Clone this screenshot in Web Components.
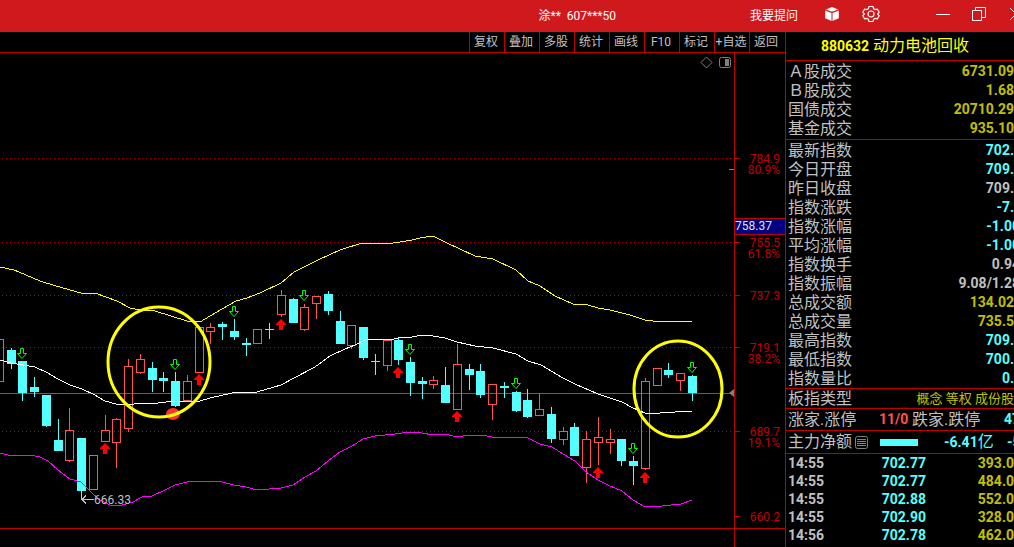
<!DOCTYPE html>
<html lang="zh-CN">
<head>
<meta charset="utf-8">
<meta name="viewport" content="width=device-width, initial-scale=1">
<title>880632 动力电池回收</title>
<style>
  html, body { margin: 0; background: #000; }
  body {
    min-height: 100vh;
    overflow: hidden;
    color: #c0c0c0;
    font-family: Roboto, "Noto Sans CJK SC", sans-serif;
    font-size: 12px;
    --line: #c00000;
    --cyan: #54ffff;
    --gold: #c0c000;
    --up: #ff5252;
  }
</style>
</head>
<body>
<trade-app>
  <title-bar slot="title">
    <span slot="account">涂** &nbsp;607***50</span>
    <a slot="ask" href="#ask">我要提问</a>
  </title-bar>
  <tool-strip slot="tools">
    <button type="button">复权</button>
    <button type="button">叠加</button>
    <button type="button">多股</button>
    <button type="button">统计</button>
    <button type="button">画线</button>
    <button type="button">F10</button>
    <button type="button">标记</button>
    <button type="button">+自选</button>
    <button type="button">返回</button>
  </tool-strip>
  <price-chart slot="chart"></price-chart>
  <quote-panel slot="quotes">
    <quote-heading><span slot="code">880632</span><span slot="name">动力电池回收</span></quote-heading>
    <quote-table data-set="turnover"></quote-table>
    <quote-table data-set="index"></quote-table>
    <quote-table data-set="kind"></quote-table>
    <advance-row></advance-row>
    <flow-row></flow-row>
    <tick-table></tick-table>
  </quote-panel>
</trade-app>

<script>
const mount = (host, html) => {
  const t = document.createElement('template');
  t.innerHTML = html;
  host.attachShadow({ mode: 'open' }).appendChild(t.content.cloneNode(true));
};

customElements.define('trade-app', class extends HTMLElement {
  constructor() {
    super();
    mount(this, `
      <style>
        :host { display: block; min-height: 100vh; }
        .body { display: grid; grid-template-columns: minmax(0, 1fr) 229px; min-height: calc(100vh - 32px); }
        main { display: flex; flex-direction: column; min-width: 0; }
      </style>
      <slot name="title"></slot>
      <div class="body">
        <main><slot name="tools"></slot><slot name="chart"></slot></main>
        <slot name="quotes"></slot>
      </div>`);
  }
});

customElements.define('title-bar', class extends HTMLElement {
  constructor() {
    super();
    mount(this, `
      <style>
        :host { display: flex; height: 32px; background: #cf191d; color: #fff; overflow: hidden;
                align-items: center; justify-content: flex-end; }
        ::slotted(a) { color: inherit; text-decoration: none; }
        .account { margin-right: 134px; padding-bottom: 4px; }
        .ask { margin-right: 26px; padding-bottom: 4px; }
        button { background: none; border: 0; padding: 0; margin: 0; height: 28px; color: #fff;
                 align-self: flex-start; display: flex; align-items: center; flex: none; }
        svg { display: block; }
        .cube { margin-right: 22px; }
        .gear { margin-right: 55px; }
        .min { margin-right: 20px; }
        .max { margin-right: 23px; }
        .close { margin-right: -8px; }
      </style>
      <span class="account"><slot name="account"></slot></span>
      <span class="ask"><slot name="ask"></slot></span>
      <button class="cube" type="button" aria-label="工具箱">
        <svg width="16" height="16" viewBox="0 0 16 16"><path fill="#fff" d="M8 1 14.2 3.4 8 5.8 1.8 3.4zM1.2 4.4 7.5 6.9v8L1.2 12.3zM14.8 4.4v7.9L8.5 14.9v-8z"/></svg>
      </button>
      <button class="gear" type="button" aria-label="设置">
        <svg width="18" height="18" viewBox="0 0 18 18" fill="none" stroke="#fff" stroke-width="1.2" stroke-linejoin="round"><path d="M7 1.5h4l.6 2.2 1.5.9 2.2-.6 1.9 3.3L15.6 9l1.6 1.7-1.9 3.3-2.2-.6-1.5.9-.6 2.2H7l-.6-2.2-1.5-.9-2.2.6L.8 10.700 2.400 9 .8 7.300 2.700 4l2.200.6 1.500-.9z"/><circle cx="9" cy="9" r="3"/></svg>
      </button>
      <button class="min" type="button" aria-label="最小化">
        <svg width="16" height="16" viewBox="0 0 16 16"><path d="M1 8.500h14" stroke="#fff"/></svg>
      </button>
      <button class="max" type="button" aria-label="还原">
        <svg width="16" height="16" viewBox="0 0 16 16" fill="none" stroke="#fff"><path d="M1.500 4.500h9v10h-9zM4.500 4.500v-3h10v10h-4"/></svg>
      </button>
      <button class="close" type="button" aria-label="关闭">
        <svg width="12" height="12" viewBox="0 0 12 12"><path d="M0 0 12 12M12 0 0 12" stroke="#fff"/></svg>
      </button>`);
  }
});

customElements.define('tool-strip', class extends HTMLElement {
  constructor() {
    super();
    mount(this, `
      <style>
        :host { display: flex; justify-content: flex-end; height: 20px; padding-right: 1px;
                border-bottom: 1px solid var(--line); }
        ::slotted(button) { width: 35px; padding: 0 2px 0 0; border: 0; border-left: 1px solid var(--line);
                background: none; color: inherit; font: inherit; line-height: 20px; white-space: nowrap; }
      </style>
      <slot></slot>`);
  }
});

/* x centre, high, low, body top, body bottom; 1 = rising (hollow) */
const CANDLES = [
  [-1,339,382,339,382,1],[11,348,369,350,364,0],[22,361,401,361,393,0],[34,377,397,387,392,0],
  [46,395,427,395,426,0],[58,419,451,440,451,0],[69,408,462,430,461,1],[81,438,499,438,491,0],
  [93,455,490,455,490,1],[105,415,442,430,442,1],[116,418,468,419,443,1],[128,359,432,366,429,1],
  [140,354,374,359,373,1],[152,362,392,368,380,0],[163,372,392,378,381,0],[175,372,407,381,406,0],
  [187,375,401,381,401,1],[199,327,373,327,373,1],[210,323,344,327,332,1],[222,322,340,324,327,0],
  [234,319,340,331,337,0],[246,338,356,343,345,0],[257,329,344,329,344,1],[269,323,339,329,330,0],
  [281,290,317,295,315,1],[293,298,323,299,323,0],[304,304,331,307,330,1],[316,296,319,296,304,1],
  [328,291,315,294,311,0],[340,311,344,321,344,0],[351,325,349,325,346,1],[363,327,360,327,358,0],
  [375,354,375,361,362,0],[387,340,371,340,366,1],[398,337,365,340,360,0],[410,357,396,362,383,0],
  [422,377,399,381,384,0],[433,376,389,380,385,1],[445,367,403,385,403,0],[457,344,410,364,410,1],
  [469,364,390,369,375,0],[480,364,398,371,395,0],[492,384,420,384,405,1],[504,382,398,386,388,0],
  [516,391,412,392,411,0],[527,389,418,400,417,0],[539,394,416,409,416,1],[551,407,443,414,439,0],
  [563,427,445,431,440,1],[574,423,456,427,456,0],[586,431,483,439,468,1],[598,417,465,437,443,1],
  [610,429,454,439,443,1],[621,439,466,439,461,0],[633,456,485,461,466,0],[645,378,470,381,469,1],
  [657,368,386,368,386,1],[668,363,378,370,375,0],[680,373,391,373,381,1],[692,375,401,376,393,0]];
const BUYS = [[105,443],[199,374],[281,319],[398,367],[457,411],[598,467],[645,472]];
const SELLS = [[22,348],[175,359],[234,306],[304,290],[410,344],[516,378],[633,443],[692,362]];
const UPPER = '0,267 14,270 26,275 40,281 56,286 81,293 95,293 117,301 130,308 140,310 155,311 187,321 200,322 210,316 222,309 236,301 247,298 260,293 281,283 294,272 304,267 320,259 340,250 362,243 378,243 387,244 400,242 412,240 420,238 433,236 447,243 475,256 493,259 516,270 528,281 540,286 555,296 573,304 588,305 598,308 610,310 630,315 645,320 653,321 686,321 692,322';
const MIDDLE = '0,360 11,363 35,367 46,372 58,379 70,385 82,389 93,394 105,401 116,404 128,405 140,403 158,403 175,401 200,401 210,398 232,393 257,392 281,385 294,378 315,367 330,356 345,349 355,345 365,340 380,339 390,340 398,338 412,337 422,335 433,336 445,338 457,342 475,346 493,348 516,354 528,361 541,365 563,378 575,384 598,394 622,402 633,408 645,413 660,413 675,412 692,411';
const LOWER = '0,453 12,456 30,455 40,457 48,461 58,470 70,479 81,482 93,494 100,500 112,506 122,505 133,502 142,497 152,496 165,490 175,485 187,482 199,481 210,481 222,482 234,485 246,487 257,490 269,489 281,488 293,485 305,477 316,471 328,461 340,452 352,446 363,439 375,436 395,434 410,432 422,433 433,435 445,434 457,437 470,435 482,435 492,437 510,437 528,438 540,444 552,447 563,454 575,461 586,472 598,480 610,486 622,491 633,500 645,507 662,506 681,504 692,500';
const LEVELS = [[158,'784.9','80.9%'],[242,'755.5','61.8%'],[295,'737.3',''],[347,'719.1','38.2%'],[431,'689.7','19.1%'],[516,'660.2','']];

const candle = ([x, hi, lo, top, bot, up]) => up
  ? `<g fill="#ff5252"><path d="M${x} ${hi}h1v${top - hi}h-1zM${x} ${bot}h1v${lo - bot}h-1z"/><path fill="none" stroke="#ff5252" d="M${x - 3.5} ${top + 0.5}h8v${bot - top - 1}h-8z"/></g>`
  : `<path fill="#54ffff" d="M${x} ${hi}h1v${lo - hi}h-1zM${x - 4} ${top}h9v${bot - top}h-9z"/>`;

customElements.define('price-chart', class extends HTMLElement {
  constructor() {
    super();
    mount(this, `
      <style>
        :host { display: block; }
        svg { display: block; width: 100%; height: auto; }
        text { font-family: Roboto, sans-serif; font-size: 12px; }
        .crisp { shape-rendering: crispEdges; }
      </style>
      <svg viewBox="0 53 785 494" role="img" aria-label="K线图">
        <g class="crisp">
          <g stroke="#c00000" stroke-dasharray="1 3">
            ${LEVELS.slice(0, 5).map(([y]) => `<path d="M2 ${y + 0.5}H733"/>`).join('')}
          </g>
          <path stroke="#606060" d="M0 393.500H734"/>
          ${CANDLES.map(candle).join('')}
          <g fill="none" stroke-width="1">
            <polyline stroke="#ffff00" points="${UPPER}"/>
            <polyline stroke="#ffffff" points="${MIDDLE}"/>
            <polyline stroke="#ff00ff" points="${LOWER}"/>
          </g>
          <g stroke="#c00000">
            <path d="M734.500 53V547M0 528.500H785"/>
            ${LEVELS.map(([y]) => `<path d="M735 ${y + 0.5}h5"/>`).join('')}
            <path stroke="#ff5252" d="M729 169.500h5"/>
          </g>
          <path fill="#000080" stroke="#c00000" d="M734.500 218.500H786V234.500H734.500z"/>
          <path stroke="#c0c0c0" fill="none" d="M82 499.500H94M86 495.500 82 499.500 86 503.500"/>
        </g>
        <path fill="#808080" d="M729 393l5-4v8z"/>
        <g fill="#ff0000">${BUYS.map(([x, y]) => `<path d="M${x} ${y}l5 5v1h-3v5h-4v-5h-3v-1z"/>`).join('')}</g>
        <g fill="none" stroke="#00ff00">${SELLS.map(([x, y]) => `<path d="M${x - 1.5} ${y + 0.5}h3v5h3l-4.500 5-4.500-5h3z"/>`).join('')}</g>
        <ellipse cx="173" cy="414" rx="7" ry="6" fill="#ff3232"/>
        <g fill="none" stroke="#ffff00" stroke-width="3">
          <ellipse cx="159" cy="362" rx="51" ry="55"/>
          <ellipse cx="678" cy="389" rx="44" ry="48"/>
        </g>
        <text x="94" y="504" fill="#c0c0c0">666.33</text>
        <text x="735" y="230" fill="#e0e0e0">758.37</text>
        <g fill="#c00000" text-anchor="end">
          ${LEVELS.map(([y, a, b]) => `<text x="780" y="${y + 5}">${a}</text>${b ? `<text x="780" y="${y + 16}">${b}</text>` : ''}`).join('')}
        </g>
        <g fill="none" stroke="#808080">
          <path d="M701 62.500 706.500 57 712 62.500 706.500 68z"/>
          <rect x="719.500" y="57.500" width="11" height="10" rx="2"/>
        </g>
        <path fill="#808080" d="M725 59h4v7h-4z"/>
      </svg>`);
  }
});

customElements.define('quote-panel', class extends HTMLElement {
  constructor() {
    super();
    mount(this, `
      <style>:host { display: block; border-left: 1px solid var(--line); overflow: hidden; min-width: 0; }</style>
      <slot></slot>`);
  }
});

customElements.define('quote-heading', class extends HTMLElement {
  constructor() {
    super();
    mount(this, `
      <style>
        :host { display: flex; justify-content: center; align-items: center; gap: 4px; height: 28px;
                padding-right: 10px; color: #ffff00; font-size: 16px; line-height: 24px;
                border-bottom: 1px solid var(--line); }
        b { font-size: 14px; }
      </style>
      <b><slot name="code"></slot></b><slot name="name"></slot>`);
  }
});

/* label, value, colour class, and whether the value runs past the panel's edge */
const SETS = {
  turnover: [['Ａ股成交','6731.09','gold'],['Ｂ股成交','1.68','gold'],['国债成交','20710.29','gold'],['基金成交','935.10','gold']],
  index: [['最新指数','702.','cyan'],['今日开盘','709.','cyan'],['昨日收盘','709.',''],['指数涨跌','-7.','cyan'],
    ['指数涨幅','-1.00','cyan',1],['平均涨幅','-1.00','cyan',1],['指数换手','0.94','',1],['指数振幅','9.08/1.28','',1],
    ['总成交额','134.02','gold'],['总成交量','735.5','gold'],['最高指数','709.','cyan'],['最低指数','700.','cyan'],['指数量比','0.','cyan']],
  kind: [['板指类型','概念 等权 成份股','gold words']]
};

customElements.define('quote-table', class extends HTMLElement {
  connectedCallback() {
    if (this.shadowRoot) return;
    mount(this, `
      <style>
        :host { display: block; border-bottom: 1px solid var(--line); }
        :host([data-set="turnover"]) { padding: 1px 0; }
        :host([data-set="index"]) { padding-top: 1px; }
        table { width: 100%; border-collapse: collapse; }
        tr { height: 19px; }
        th, td { padding: 0; line-height: 19px; white-space: nowrap; }
        th { padding-left: 2px; text-align: left; font-weight: 400; font-size: 16px; }
        td { text-align: right; font-size: 14px; font-weight: 700; }
        .gold { color: var(--gold); }
        .cyan { color: var(--cyan); }
        .words { font-size: 13px; font-weight: 400; }
        .over { margin-right: -6px; }
      </style>
      <table>${SETS[this.dataset.set].map(([k, v, c, o]) =>
        `<tr><th scope="row">${k}</th><td class="${c}"><span class="${o ? 'over' : ''}">${v}</span></td></tr>`).join('')}</table>`);
  }
});

customElements.define('advance-row', class extends HTMLElement {
  constructor() {
    super();
    mount(this, `
      <style>
        :host { display: grid; grid-template-columns: 91px 33px 92px 1fr; align-items: center; height: 21px;
                padding-left: 2px; border-bottom: 1px solid var(--line); font-size: 16px; line-height: 21px; white-space: nowrap; overflow: hidden; }
        b { font-size: 14px; }
        .up { color: var(--up); }
        .down { color: var(--cyan); }
      </style>
      <span>涨家.涨停</span><b class="up">11/0</b><span>跌家.跌停</span><b class="down">47</b>`);
  }
});

customElements.define('flow-row', class extends HTMLElement {
  constructor() {
    super();
    mount(this, `
      <style>
        :host { display: grid; grid-template-columns: 67px 25px 64px 63px 1fr; align-items: center; height: 22px;
                padding-left: 2px; border-bottom: 1px solid var(--line); font-size: 16px; line-height: 22px; white-space: nowrap; overflow: hidden; }
        svg { display: block; }
        .bar { width: 38px; height: 7px; background: var(--cyan); }
        b { font-size: 14px; }
        .down { color: var(--cyan); }
      </style>
      <span>主力净额</span>
      <svg width="13" height="13" viewBox="0 0 13 13" fill="none" stroke="#808080"><rect x=".5" y=".5" width="12" height="12" rx="2"/><path d="M2 3.500h9M2 5.500h9M2 7.500h9M2 9.500h9"/></svg>
      <i class="bar"></i>
      <span class="down"><b>-6.41</b>亿</span><b class="down">-5</b>`);
  }
});

const TICKS = [['14:55','702.77','393.0'],['14:55','702.77','484.0'],['14:55','702.88','552.0'],['14:55','702.90','328.0'],['14:56','702.78','462.0']];

customElements.define('tick-table', class extends HTMLElement {
  constructor() {
    super();
    mount(this, `
      <style>
        :host { display: block; }
        table { width: 100%; border-collapse: collapse; font-size: 14px; font-weight: 700; }
        tr { height: 18px; }
        td { padding: 0; line-height: 18px; text-align: right; }
        td:first-child { width: 72px; padding-left: 2px; text-align: left; }
        td:nth-child(2) { width: 66px; color: var(--cyan); }
        td:last-child { color: var(--gold); }
      </style>
      <table>${TICKS.map(r => `<tr>${r.map(c => `<td>${c}</td>`).join('')}</tr>`).join('')}</table>`);
  }
});
</script>
</body>
</html>
